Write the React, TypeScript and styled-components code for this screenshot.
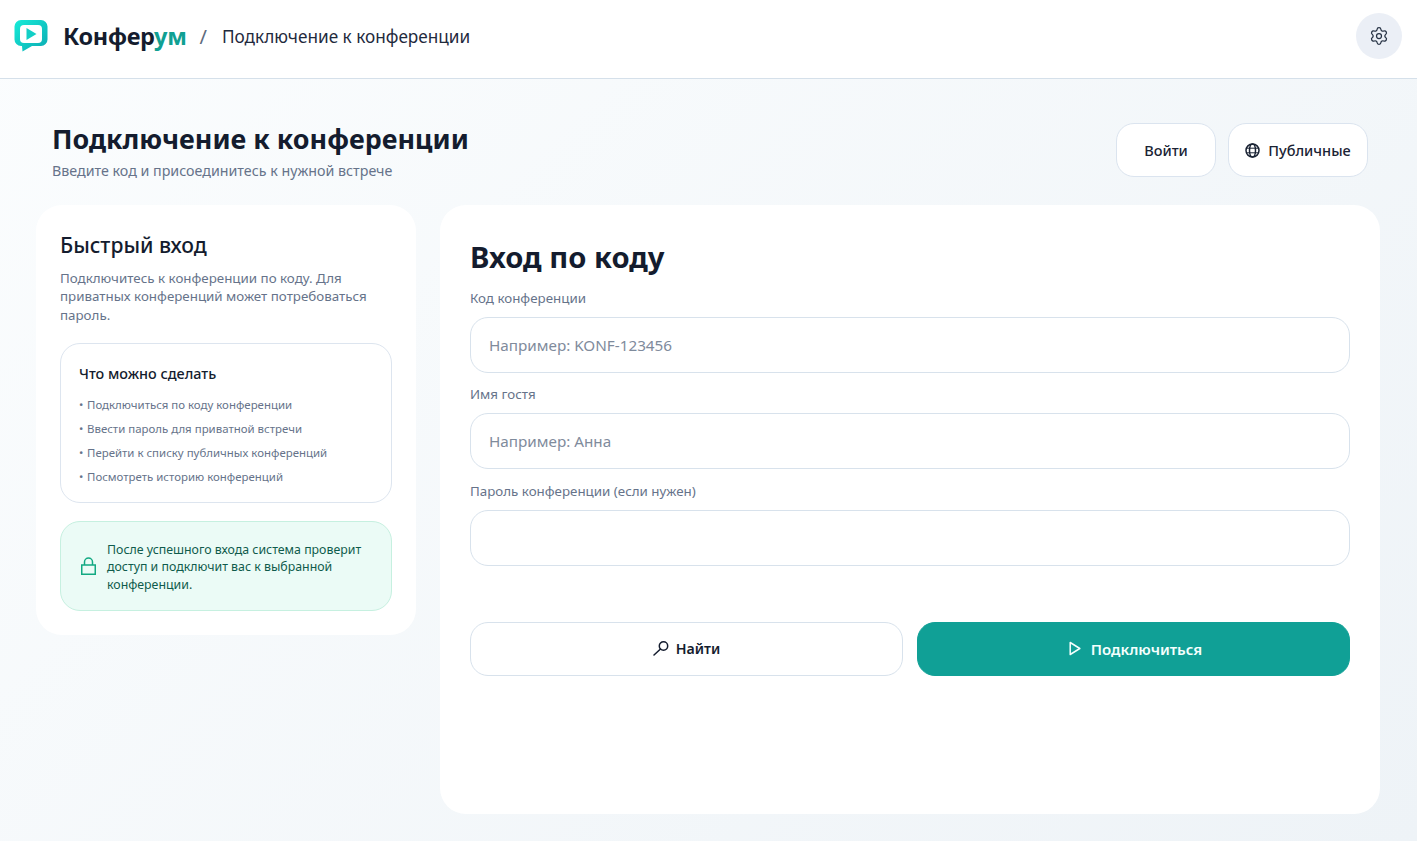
import styled, { createGlobalStyle } from "styled-components";
import { Settings } from "lucide-react";

const GlobalStyle = createGlobalStyle`
  html, body {
    margin: 0;
    padding: 0;
  }
  body {
    font-family: "Noto Sans", "Open Sans", sans-serif;
    color: #141c2e;
  }
  * {
    box-sizing: border-box;
  }
`;

const Logo = () => (
  <LogoMark width="34" height="33" viewBox="0 0 34 33">
    <defs>
      <linearGradient id="logoFill" x1="0" y1="0" x2="1" y2="1">
        <stop offset="0" stopColor="#17ecd8" />
        <stop offset="1" stopColor="#0caab2" />
      </linearGradient>
    </defs>
    <path
      d="M7 1h20a6.500 6.500 0 0 1 6.500 6.500v13a6.500 6.500 0 0 1-6.500 6.500H18L8.500 32.500 8 27H7a6.500 6.500 0 0 1-6.500-6.500v-13A6.500 6.500 0 0 1 7 1z"
      fill="url(#logoFill)"
    />
    <rect x="6" y="6" width="22" height="18" rx="4" fill="#fff" />
    <path d="M12.500 9l10 6-10 6z" fill="#12cfc6" />
  </LogoMark>
);

const GlobeIcon = () => (
  <svg width="15" height="15" viewBox="0 0 15 15" fill="none" stroke="currentColor" strokeWidth="1.5">
    <circle cx="7.500" cy="7.500" r="6.500" />
    <ellipse cx="7.500" cy="7.500" rx="3" ry="6.500" />
    <path d="M1.500 5.200h12M1.500 9.800h12" strokeWidth="1" />
  </svg>
);

const SearchIcon = () => (
  <svg width="16" height="15" viewBox="0 0 16 15" fill="none" stroke="currentColor" strokeWidth="1.5">
    <circle cx="10.500" cy="5" r="4.200" />
    <path d="M7.500 8L1 14" strokeLinecap="round" />
  </svg>
);

const PlayIcon = () => (
  <svg width="12" height="15" viewBox="0 0 12 15" fill="none" stroke="currentColor" strokeWidth="1.5">
    <path d="M1.200 1.500L10.800 7.500L1.200 13.500z" strokeLinejoin="round" />
  </svg>
);

const LockIcon = () => (
  <svg width="15" height="18" viewBox="0 0 15 18" fill="none" stroke="#12a982" strokeWidth="1.5">
    <rect x="0.750" y="8" width="13.500" height="9.250" />
    <path d="M3.500 8V5a4 4 0 0 1 8 0v3" />
  </svg>
);

const features = [
  "Подключиться по коду конференции",
  "Ввести пароль для приватной встречи",
  "Перейти к списку публичных конференций",
  "Посмотреть историю конференций",
];

export default function App() {
  return (
    <Page>
      <GlobalStyle />
      <Header>
        <Brand>
          <Logo />
          <BrandName>
            Конфер<span>ум</span>
          </BrandName>
          <Slash>/</Slash>
          <Crumb>Подключение к конференции</Crumb>
        </Brand>
        <RoundButton aria-label="Настройки">
          <Settings size={20} strokeWidth={1.5} />
        </RoundButton>
      </Header>
      <Main>
        <PageHead>
          <div>
            <PageTitle>Подключение к конференции</PageTitle>
            <PageSubtitle>Введите код и присоединитесь к нужной встрече</PageSubtitle>
          </div>
          <HeadActions>
            <GhostButton $width={100}>Войти</GhostButton>
            <GhostButton $width={140}>
              <GlobeIcon />
              Публичные
            </GhostButton>
          </HeadActions>
        </PageHead>
        <Columns>
          <SideCard>
            <SideTitle>Быстрый вход</SideTitle>
            <SideText>
              Подключитесь к конференции по коду. Для приватных конференций может потребоваться пароль.
            </SideText>
            <FeatureBox>
              <FeatureTitle>Что можно сделать</FeatureTitle>
              <FeatureList>
                {features.map(item => (
                  <li key={item}>{item}</li>
                ))}
              </FeatureList>
            </FeatureBox>
            <Notice>
              <LockIcon />
              <span>
                После успешного входа система проверит доступ и подключит вас к выбранной конференции.
              </span>
            </Notice>
          </SideCard>
          <FormCard>
            <FormTitle>Вход по коду</FormTitle>
            <Field>
              <Label>Код конференции</Label>
              <Input placeholder="Например: KONF-123456" />
            </Field>
            <Field>
              <Label>Имя гостя</Label>
              <Input placeholder="Например: Анна" />
            </Field>
            <Field>
              <Label>Пароль конференции (если нужен)</Label>
              <Input type="password" />
            </Field>
            <FormActions>
              <ActionButton>
                <SearchIcon />
                Найти
              </ActionButton>
              <ActionButton $primary>
                <PlayIcon />
                Подключиться
              </ActionButton>
            </FormActions>
          </FormCard>
        </Columns>
      </Main>
    </Page>
  );
}

const Page = styled.div`
  min-height: 841px;
  background: linear-gradient(135deg, #fbfdfe 0%, #eef3f7 100%);
`;

const Header = styled.header`
  height: 79px;
  background: #fff;
  border-bottom: 1px solid #d5e0ea;
  padding: 0 15px 6px 14px;
  display: flex;
  align-items: center;
  justify-content: space-between;
`;

const Brand = styled.div`
  display: flex;
  align-items: center;
`;

const LogoMark = styled.svg`
  margin-top: -2px;
`;

const BrandName = styled.div`
  margin-left: 15px;
  font-size: 23.500px;
  font-weight: 700;
  letter-spacing: -0.3px;
  color: #141c2e;
  span {
    color: #10a093;
  }
`;

const Slash = styled.span`
  margin-left: 13px;
  font-size: 20px;
  color: #5f6b7d;
`;

const Crumb = styled.span`
  margin-left: 15px;
  font-size: 17.200px;
  color: #1f2a3d;
`;

const RoundButton = styled.button`
  width: 46px;
  height: 46px;
  border: none;
  border-radius: 50%;
  background: #ebeff6;
  color: #263244;
  display: flex;
  align-items: center;
  justify-content: center;
  padding: 0;
`;

const Main = styled.main`
  padding: 44px 37px 27px 36px;
`;

const PageHead = styled.div`
  display: flex;
  justify-content: space-between;
  align-items: center;
  padding: 0 12px 0 16px;
  height: 54px;
  margin-bottom: 28px;
`;

const PageTitle = styled.h1`
  margin: 0;
  font-size: 26.900px;
  line-height: 34px;
  font-weight: 700;
  color: #141c2e;
`;

const PageSubtitle = styled.p`
  margin: 5px 0 -3px;
  font-size: 14.250px;
  line-height: 20px;
  color: #66738a;
`;

const HeadActions = styled.div`
  display: flex;
  gap: 12px;
`;

const GhostButton = styled.button<{ $width: number }>`
  width: ${({ $width }) => $width}px;
  height: 54px;
  background: #fff;
  border: 1px solid #dbe4ef;
  border-radius: 18px;
  display: flex;
  align-items: center;
  justify-content: center;
  gap: 8px;
  font-family: inherit;
  font-size: 14.500px;
  font-weight: 500;
  color: #1a2334;
  padding: 0;
`;

const Columns = styled.div`
  display: grid;
  grid-template-columns: 380px 1fr;
  gap: 24px;
  align-items: start;
`;

const SideCard = styled.section`
  background: #fff;
  border-radius: 26px;
  padding: 24px;
  height: 430px;
`;

const SideTitle = styled.h2`
  margin: 0 0 8px;
  font-size: 21.100px;
  line-height: 32px;
  font-weight: 500;
  color: #141c2e;
`;

const SideText = styled.p`
  margin: 0 0 19px;
  font-size: 13.350px;
  line-height: 18.300px;
  color: #66738a;
`;

const FeatureBox = styled.div`
  height: 160px;
  border: 1px solid #dde5ef;
  border-radius: 20px;
  padding: 20px 18px;
`;

const FeatureTitle = styled.div`
  font-size: 14.400px;
  line-height: 20px;
  font-weight: 500;
  color: #141c2e;
  margin-bottom: 9px;
`;

const FeatureList = styled.ul`
  list-style: none;
  margin: 0;
  padding: 0;
  font-size: 11.450px;
  line-height: 24px;
  color: #66738a;
  li::before {
    content: "•";
    display: inline-block;
    width: 8px;
  }
`;

const Notice = styled.div`
  margin-top: 18px;
  height: 90px;
  background: #ebfbf6;
  border: 1px solid #c6f0e0;
  border-radius: 20px;
  padding: 2px 18px 0 20px;
  display: flex;
  align-items: center;
  gap: 11px;
  font-size: 12.350px;
  line-height: 17.500px;
  color: #0f5b4c;
  svg {
    flex: none;
    margin-top: -2px;
  }
`;

const FormCard = styled.section`
  background: #fff;
  border-radius: 26px;
  padding: 30px;
  height: 609px;
`;

const FormTitle = styled.h2`
  margin: 0 0 10px;
  font-size: 29.200px;
  line-height: 44px;
  font-weight: 700;
  color: #141c2e;
`;

const Field = styled.label`
  display: block;
  margin-bottom: 12.400px;
`;

const Label = styled.div`
  font-size: 13.350px;
  line-height: 18px;
  margin-bottom: 10px;
  color: #66738a;
`;

const Input = styled.input`
  display: block;
  width: 100%;
  height: 56px;
  border: 1px solid #d8e2ec;
  border-radius: 18px;
  background: #fff;
  padding: 0 18px;
  font-family: inherit;
  font-size: 15.250px;
  color: #141c2e;
  outline: none;
  &::placeholder {
    color: #7f8b9c;
    opacity: 1;
  }
`;

const FormActions = styled.div`
  display: grid;
  grid-template-columns: 1fr 1fr;
  gap: 14px;
  margin-top: 56px;
`;

const ActionButton = styled.button<{ $primary?: boolean }>`
  height: 54px;
  border-radius: 18px;
  border: 1px solid ${({ $primary }) => ($primary ? "#10a096" : "#d8e2ec")};
  background: ${({ $primary }) => ($primary ? "#10a096" : "#fff")};
  color: ${({ $primary }) => ($primary ? "#f4fffd" : "#141c2e")};
  display: flex;
  align-items: center;
  justify-content: center;
  gap: ${({ $primary }) => ($primary ? "10px" : "7px")};
  font-family: inherit;
  font-size: ${({ $primary }) => ($primary ? "15px" : "14.200px")};
  font-weight: 600;
  padding: 0 0 0 ${({ $primary }) => ($primary ? "4px" : "0")};
`;
